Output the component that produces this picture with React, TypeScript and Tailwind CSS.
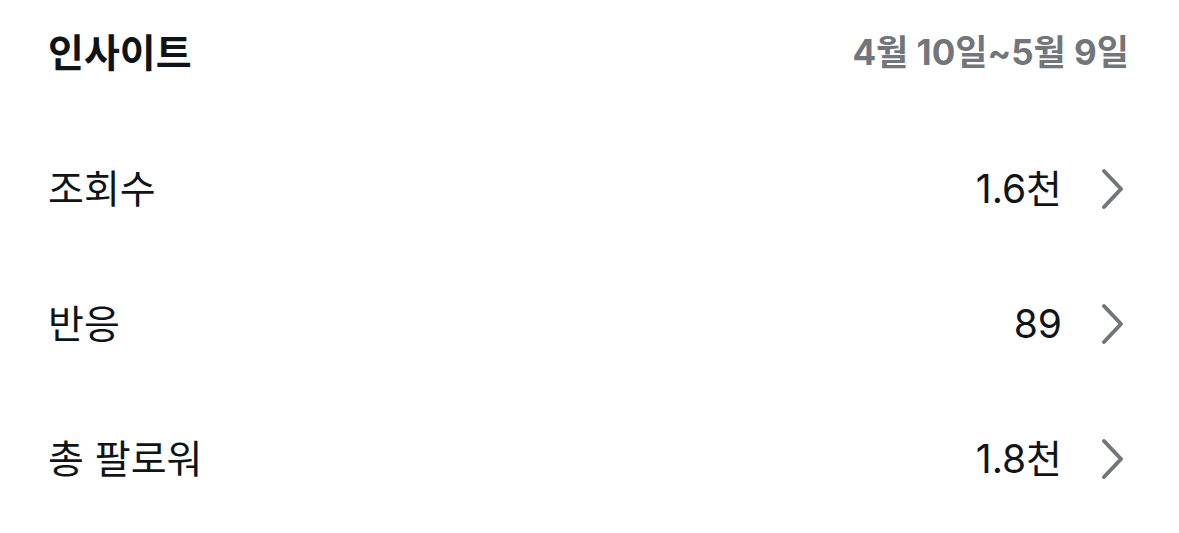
import React from "react";

const rows = [
  { label: "조회수", value: "1.6천" },
  { label: "반응", value: "89" },
  { label: "총 팔로워", value: "1.8천" },
];

const Chevron = () => (
  <svg width="24" height="42" viewBox="0 0 24 42" fill="none" className="shrink-0">
    <path
      d="M3 3 L20 21 L3 39"
      stroke="#71767b"
      strokeWidth="4"
      strokeLinecap="round"
      strokeLinejoin="round"
    />
  </svg>
);

const App = () => {
  return (
    <div
      className="w-[1179px] h-[533px] bg-white text-[#0f1419] px-[48px] pt-[24px]"
      style={{ fontFamily: 'Inter, "Noto Sans CJK KR", "Noto Sans", sans-serif' }}
    >
      <div className="flex items-center justify-between h-[56px]">
        <h3 className="font-bold text-[39px] leading-none">인사이트</h3>
        <span className="font-bold text-[35px] text-[#71767b] leading-none mr-[2px]">
          4월 10일~5월 9일
        </span>
      </div>
      <div className="flex flex-col mt-[41px]">
        {rows.map((r) => (
          <div key={r.label} className="flex items-center justify-between h-[135px]">
            <span className="text-[39px] leading-none">{r.label}</span>
            <div className="flex items-center gap-[39px] mr-[6px]">
              <span className="text-[39px] leading-none">{r.value}</span>
              <Chevron />
            </div>
          </div>
        ))}
      </div>
    </div>
  );
};

export default App;
